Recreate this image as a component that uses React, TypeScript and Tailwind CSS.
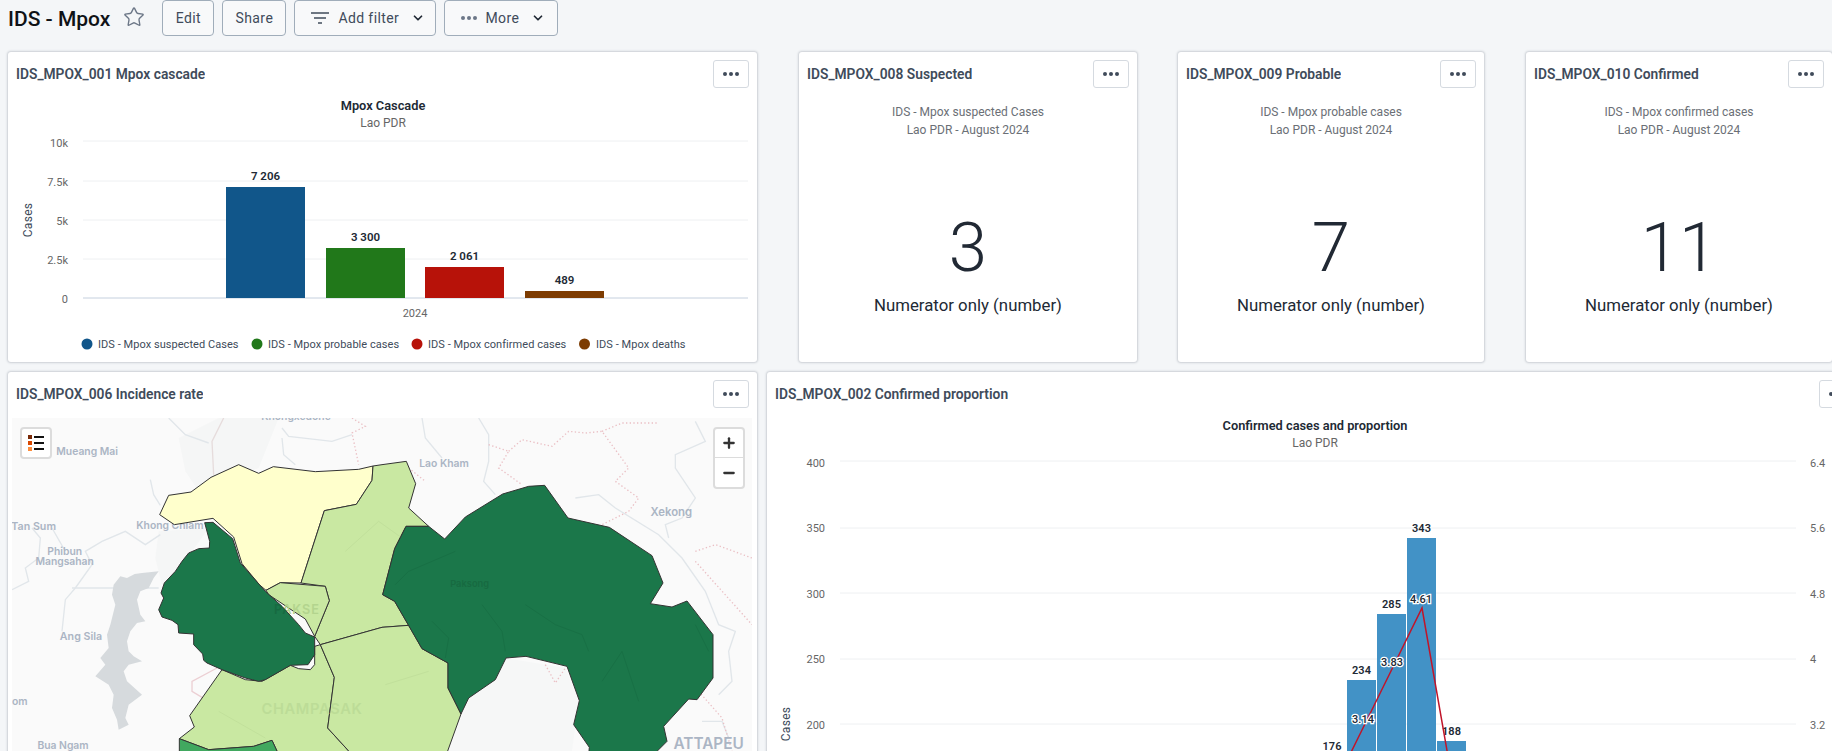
import type { ReactNode } from 'react';
import { ChevronDown, Minus, Plus, Star } from 'lucide-react';

function Dots({ fill = '#404b5a' }: { fill?: string }) {
  return (
    <svg width="18" height="6" viewBox="0 0 18 6" fill={fill}>
      <circle cx="3" cy="3" r="2" />
      <circle cx="9" cy="3" r="2" />
      <circle cx="15" cy="3" r="2" />
    </svg>
  );
}

function HeaderButton({ children, className = '' }: { children: ReactNode; className?: string }) {
  return (
    <button className={`flex h-9 items-center rounded-[4px] border border-[#a0adba] bg-[#f8f9fa] text-sm tracking-[0.4px] text-[#404b5a] ${className}`}>
      {children}
    </button>
  );
}

function Card({ title, className = '', children }: { title: string; className?: string; children: ReactNode }) {
  return (
    <div className={`shrink-0 rounded-[3px] bg-white shadow-[0_0_2px_1px_rgba(64,75,90,0.22)] ${className}`}>
      <div className="flex items-center justify-between px-2 pt-2">
        <h3 className="truncate text-[13.8px] font-semibold text-[#404b5a]">{title}</h3>
        <button className="flex h-7 w-9 shrink-0 items-center justify-center rounded-[3px] border border-[#d5dae0] bg-white">
          <Dots />
        </button>
      </div>
      {children}
    </div>
  );
}

function NumberCard({ title, sub, value, className }: { title: string; sub: string; value: string; className: string }) {
  return (
    <Card title={title} className={`h-[310px] ${className}`}>
      <div className="flex flex-col items-center pt-[15px] text-center">
        <p className="text-xs leading-[18px] text-[#6b6f76]">{sub}</p>
        <p className="text-xs leading-[18px] text-[#6b6f76]">Lao PDR - August 2024</p>
        <p className="mt-[74px] text-[69px] leading-none font-light text-[#212934]">{value}</p>
        <p className="mt-[11px] text-[16.8px] leading-6 text-[#212934]">Numerator only (number)</p>
      </div>
    </Card>
  );
}

const cascadeBars = [
  { x: 226, top: 187, fill: '#11568a', label: '7 206', ly: 180 },
  { x: 326, top: 248, fill: '#21781a', label: '3 300', ly: 241 },
  { x: 425, top: 267, fill: '#b71209', label: '2 061', ly: 260 },
  { x: 525, top: 291, fill: '#7d3c02', label: '489', ly: 284 },
];

const cascadeLegend = [
  { cx: 87, tx: 98, fill: '#11568a', label: 'IDS - Mpox suspected Cases' },
  { cx: 257, tx: 268, fill: '#21781a', label: 'IDS - Mpox probable cases' },
  { cx: 417, tx: 428, fill: '#b71209', label: 'IDS - Mpox confirmed cases' },
  { cx: 584.5, tx: 596, fill: '#7d3c02', label: 'IDS - Mpox deaths' },
];

const cascadeTicks = [
  { label: '10k', y: 141, ty: 147 },
  { label: '7.5k', y: 181, ty: 186 },
  { label: '5k', y: 220, ty: 225 },
  { label: '2.5k', y: 259, ty: 264 },
  { label: '0', y: 298, ty: 303 },
];

function CascadeChart() {
  // viewBox uses page coordinates
  return (
    <svg width="749" height="274" viewBox="8 88 749 274" className="block">
      <text x="383" y="110" textAnchor="middle" fontSize="12.8" fontWeight="600" fill="#212934">Mpox Cascade</text>
      <text x="383" y="127" textAnchor="middle" fontSize="12" fill="#666">Lao PDR</text>
      {cascadeTicks.map((t) => (
        <g key={t.label}>
          <line x1="83" x2="748" y1={t.y} y2={t.y} stroke={t.label === '0' ? '#c5d0de' : '#eef0f2'} strokeWidth="1" />
          <text x="68" y={t.ty} textAnchor="end" fontSize="11" fill="#666">{t.label}</text>
        </g>
      ))}
      <text transform="translate(32 220) rotate(-90)" textAnchor="middle" fontSize="12" letterSpacing="0.3" fill="#404b5a">Cases</text>
      {cascadeBars.map((b) => (
        <g key={b.label}>
          <rect x={b.x} y={b.top} width="79" height={298 - b.top} fill={b.fill} />
          <text x={b.x + 39.5} y={b.ly} textAnchor="middle" fontSize="11.5" fontWeight="600" fill="#212934">{b.label}</text>
        </g>
      ))}
      <text x="415" y="317" textAnchor="middle" fontSize="11" fill="#666">2024</text>
      {cascadeLegend.map((l) => (
        <g key={l.label}>
          <circle cx={l.cx} cy="344" r="5.5" fill={l.fill} />
          <text x={l.tx} y="348" fontSize="11" letterSpacing="0.05" fill="#404b5a">{l.label}</text>
        </g>
      ))}
    </svg>
  );
}

const proportionTicks = [
  { l: '400', r: '6.4', y: 461, ty: 467 },
  { l: '350', r: '5.6', y: 528, ty: 532 },
  { l: '300', r: '4.8', y: 593, ty: 598 },
  { l: '250', r: '4', y: 659, ty: 663 },
  { l: '200', r: '3.2', y: 724, ty: 729 },
];

const proportionBars = [
  { x: 1347, top: 680, label: '234', ly: 674 },
  { x: 1377, top: 614, label: '285', ly: 608 },
  { x: 1407, top: 538, label: '343', ly: 532 },
  { x: 1437, top: 741, label: '188', ly: 735 },
];

function ProportionChart() {
  return (
    <svg width="1096" height="343" viewBox="767 408 1096 343" className="block">
      <text x="1315" y="430" textAnchor="middle" fontSize="12.8" fontWeight="600" fill="#212934">Confirmed cases and proportion</text>
      <text x="1315" y="447" textAnchor="middle" fontSize="12" fill="#666">Lao PDR</text>
      {proportionTicks.map((t) => (
        <g key={t.l}>
          <line x1="840" x2="1796" y1={t.y} y2={t.y} stroke="#eef0f2" />
          <text x="825" y={t.ty} textAnchor="end" fontSize="11" fill="#666">{t.l}</text>
          <text x="1810" y={t.ty} fontSize="11" fill="#666">{t.r}</text>
        </g>
      ))}
      <text transform="translate(790 724) rotate(-90)" textAnchor="middle" fontSize="12" letterSpacing="0.3" fill="#404b5a">Cases</text>
      {proportionBars.map((b) => (
        <g key={b.label}>
          <rect x={b.x} y={b.top} width="29" height={751 - b.top} fill="#4292c6" />
          <text x={b.x + 14.5} y={b.ly} textAnchor="middle" fontSize="11" fontWeight="600" fill="#212934">{b.label}</text>
        </g>
      ))}
      <text x="1332" y="750" textAnchor="middle" fontSize="11" fontWeight="600" fill="#212934">176</text>
      <polyline points="1332,791 1362,730 1392,669 1422,608 1452,779" fill="none" stroke="#c0152a" strokeWidth="1.5" />
      {[
        { t: '3.14', x: 1363, y: 723 },
        { t: '3.83', x: 1392, y: 666 },
        { t: '4.61', x: 1421, y: 603 },
      ].map((d) => (
        <text key={d.t} x={d.x} y={d.y} textAnchor="middle" fontSize="11" fontWeight="500" fill="#212934" stroke="#fff" strokeWidth="2.5" className="[paint-order:stroke]">
          {d.t}
        </text>
      ))}
    </svg>
  );
}

// map geometry in 3x units, 2220 x 999 = 740 x 333 px
const rivers = [
  '470,0 520,50 590,75',
  '810,30 830,55 960,70 1020,50',
  '810,60 815,110 850,140',
  '415,185 425,230 445,262',
  '445,350 400,380 340,340 270,370 220,400 240,440 190,510',
  '120,330 160,400',
  '60,330 85,360 80,420 40,450 50,490 0,515',
  '190,510 160,545 150,640',
  '180,510 440,510',
  '1230,0 1240,60 1290,120',
  '1400,0 1430,50 1430,130 1415,190 1450,230',
  '1690,240 1760,230 1810,270 1940,350 2010,420 2080,520 2120,620 2170,640 2150,700 2160,790 2120,830',
  '2050,10 2080,70 1990,110 1990,150 2050,240 2010,300 1960,320 1970,360',
  '2070,910 2130,910 2150,960',
];

// faint veins that show through the choropleth
const darkVeins = [
  '1410,560 1470,640 1480,700',
  '1830,700 1770,790',
  '1830,700 1880,850',
  '2050,620 2090,700',
  '1540,560 1630,620 1710,650 1730,700',
  '1260,610 1310,660 1300,720',
  '1330,400 1190,460 1150,500',
];

const lightVeins = ['1000,400 1100,310 1170,360', '1120,800 1250,760', '620,880 760,960'];

const borders = [
  '1430,80 1490,100 1460,150 1530,200',
  '1490,100 1530,65 1620,85 1670,40 1720,45 1770,40 1850,150 1810,190 1880,240 1850,280 1770,320',
  '1770,40 1830,15 1940,15',
  '2050,400 2110,380 2220,420',
  '2050,430 2220,620',
  '2060,820 2130,900 2160,999',
  '1020,0 1060,25 1020,45 1040,140',
  '1190,150 1240,190',
  '1600,740 1630,795 1660,750',
];

const baseLabels = [
  { t: 'Mueang Mai', x: 133, y: 110, size: 31 },
  { t: 'Tan Sum', x: -2, y: 337, size: 32 },
  { t: 'Khong Chiam', x: 373, y: 333, size: 31 },
  { t: 'om', x: 0, y: 860, size: 31 },
];

const centeredLabels = [
  { t: 'Phibun', x: 158, y: 410, size: 31 },
  { t: 'Mangsahan', x: 158, y: 440, size: 31 },
  { t: 'Ang Sila', x: 207, y: 667, size: 32 },
  { t: 'Bua Ngam', x: 153, y: 994, size: 31 },
  { t: 'Khongxedone', x: 852, y: 6, size: 31 },
  { t: 'Lao Kham', x: 1296, y: 147, size: 31 },
  { t: 'Xekong', x: 1978, y: 295, size: 34 },
  { t: 'ATTAPEU', x: 2090, y: 994, size: 46 },
];

const westDistrict =
  '578,314 603,313 662,362 685,435 760,520 810,565 860,620 880,645 908,657 908,710 888,740 835,742 760,785 740,790 700,780 630,755 585,735 575,727 572,708 545,680 545,648 500,645 498,620 480,607 450,597 440,575 455,540 447,525 457,495 490,460 510,430 530,405 560,392 592,390 593,370';

function LaoMap() {
  return (
    <svg width="740" height="333" viewBox="0 0 2220 999" className="block bg-[#fafafa]" fontFamily="Inter, sans-serif" fontWeight="600">
      <clipPath id="west-district">
        <polygon points={westDistrict} />
      </clipPath>
      <polygon points="500,60 620,0 800,0 740,150 560,220 520,160" fill="#f5f6f6" />
      <polygon points="440,340 590,330 540,400 450,500 430,420" fill="#f5f6f6" />
      <polygon points="1480,720 1660,750 1700,850 1680,999 1310,999 1370,840 1450,785" fill="#f6f7f7" />
      <polyline points="635,0 600,70 605,170" fill="none" stroke="#e6dcdc" strokeWidth="4" />
      <polyline points="615,750 540,790 540,820 590,850" fill="none" stroke="#eccfd3" strokeWidth="4" />
      {rivers.map((r) => (
        <polyline key={r} points={r} fill="none" stroke="#e1e6ea" strokeWidth="4" />
      ))}
      {borders.map((b) => (
        <polyline key={b} points={b} fill="none" stroke="#eabfc4" strokeWidth="4" strokeDasharray="4 7" />
      ))}
      <polygon
        points="325,475 345,480 368,468 390,465 440,460 425,480 410,510 385,520 375,545 385,590 400,610 375,615 355,640 345,670 350,700 365,715 390,730 350,740 335,760 345,790 390,830 350,860 340,900 350,920 320,935 315,905 300,870 305,830 290,800 250,775 280,740 265,720 290,690 285,650 295,620 310,560 300,530 305,500"
        fill="#d6dadd"
      />
      {baseLabels.map((l) => (
        <text key={l.t} x={l.x} y={l.y} fontSize={l.size} fill="#abb5c4">{l.t}</text>
      ))}
      {centeredLabels.map((l) => (
        <text key={l.t} x={l.x} y={l.y} fontSize={l.size} fill="#abb5c4" textAnchor="middle">{l.t}</text>
      ))}

      <g stroke="#333" strokeWidth="3" strokeLinejoin="round">
        <polygon
          fill="#ffffcc"
          points="443,290 470,232 537,222 597,178 680,140 740,166 784,146 910,161 1040,154 1083,144 1080,187 1033,259 937,278 867,495 805,494 762,517 742,500 690,437 665,357 603,301 487,320"
        />
        <polygon
          fill="#c9e8a2"
          points="1083,144 1110,140 1183,130 1211,197 1190,270 1250,325 1182,325 1148,392 1112,530 1148,550 1190,622 1110,628 925,680 908,655 952,548 940,505 867,495 937,278 1033,259 1080,187"
        />
        <polygon fill="#c9e8a2" points="762,517 805,494 940,505 952,548 908,655 880,603 845,580 770,530" />
        <polygon
          fill="#c9e8a2"
          points="630,755 700,785 750,790 835,742 860,752 895,755 908,740 908,685 925,680 967,778 947,930 1020,1010 800,1010 780,967 725,985 590,995 502,962 547,927 533,893"
        />
        <polygon
          fill="#c9e8a2"
          points="925,680 1110,628 1190,622 1230,692 1308,735 1308,810 1347,888 1307,999 1307,1010 1020,1010 947,930 967,778"
        />
        <polygon fill="#41a85f" points="502,962 590,995 725,985 780,967 800,1010 502,1010" />
      </g>
      <text x="855" y="588" fontSize="38" letterSpacing="3" fill="#b3d48e" textAnchor="middle">PAKSE</text>
      <text x="900" y="889" fontSize="44" letterSpacing="2" fill="#bcdc97" textAnchor="middle">CHAMPASAK</text>
      {lightVeins.map((v) => (
        <polyline key={v} points={v} fill="none" stroke="#c1e09b" strokeWidth="3" />
      ))}
      <g stroke="#333" strokeWidth="3" strokeLinejoin="round">
        <polygon fill="#1b774a" points={westDistrict} />
        <polygon
          fill="#1b774a"
          points="1112,530 1148,392 1182,325 1250,325 1298,363 1360,297 1472,228 1550,205 1598,202 1668,300 1792,328 1920,413 1953,495 1915,557 1980,567 2025,549 2103,650 2103,780 2055,845 2030,843 1955,925 1965,970 1935,1000 1935,1010 1730,1010 1732,988 1685,920 1702,848 1665,745 1542,715 1482,720 1450,785 1370,840 1347,888 1308,810 1308,735 1230,692 1148,550"
        />
      </g>
      {darkVeins.map((v) => (
        <polyline key={v} points={v} fill="none" stroke="#187045" strokeWidth="3" />
      ))}
      <text x="855" y="588" fontSize="38" letterSpacing="3" fill="#176a41" textAnchor="middle" clipPath="url(#west-district)">PAKSE</text>
      <text x="1373" y="508" fontSize="28" fill="#176a41" textAnchor="middle">Paksong</text>
    </svg>
  );
}

export default function App() {
  return (
    <div className="h-[751px] w-[1832px] overflow-hidden bg-[#f4f6f8] font-[Roboto,sans-serif]">
      <header className="flex h-[52px] items-start pl-2">
        <h1 className="mt-[5px] text-[21px] leading-7 font-medium text-[#0f1216]">IDS - Mpox</h1>
        <Star size={22} strokeWidth={1.5} className="mt-[6px] ml-[13px] text-[#6c7787]" />
        <div className="ml-[17px] flex gap-2">
          <HeaderButton className="w-[52px] justify-center">Edit</HeaderButton>
          <HeaderButton className="w-[64px] justify-center">Share</HeaderButton>
          <HeaderButton className="w-[142px] pl-4">
            <svg width="18" height="14" viewBox="0 0 18 14" stroke="#404b5a" strokeWidth="1.5" className="mr-[9px]">
              <line x1="0" x2="18" y1="2" y2="2" />
              <line x1="3" x2="15" y1="7" y2="7" />
              <line x1="7" x2="11" y1="12" y2="12" />
            </svg>
            Add filter
            <ChevronDown size={14} strokeWidth={3} className="ml-3 text-[#212934]" />
          </HeaderButton>
          <HeaderButton className="w-[114px] pl-[15px]">
            <Dots fill="#6c7787" />
            <span className="ml-[7px]">More</span>
            <ChevronDown size={14} strokeWidth={3} className="ml-3 text-[#212934]" />
          </HeaderButton>
        </div>
      </header>

      <div className="flex gap-[42px] pl-2">
        <Card title="IDS_MPOX_001 Mpox cascade" className="h-[310px] w-[749px]">
          <CascadeChart />
        </Card>
        <NumberCard title="IDS_MPOX_008 Suspected" sub="IDS - Mpox suspected Cases" value="3" className="w-[338px]" />
        <NumberCard title="IDS_MPOX_009 Probable" sub="IDS - Mpox probable cases" value="7" className="-ml-px w-[306px]" />
        <NumberCard title="IDS_MPOX_010 Confirmed" sub="IDS - Mpox confirmed cases" value="11" className="w-[306px]" />
      </div>

      <div className="mt-[10px] flex gap-[10px] pl-2">
        <Card title="IDS_MPOX_006 Incidence rate" className="h-[400px] w-[749px]">
          <div className="relative mx-1 mt-[10px]">
            <LaoMap />
            <button className="absolute top-[9px] left-[8px] flex h-[32px] w-[32px] flex-col items-center justify-center gap-[2px] rounded-[4px] border-2 border-[#dcdcdc] bg-white">
              {['#7a2a08', '#d94801', '#fd8d3c'].map((c) => (
                <span key={c} className="flex items-center gap-[2px]">
                  <span className="h-1 w-1 bg-current" style={{ color: c }} />
                  <span className="h-[2px] w-[10px] bg-[#111]" />
                </span>
              ))}
            </button>
            <div className="absolute top-[9px] right-[8px] flex w-[32px] flex-col overflow-hidden rounded-[4px] border-2 border-[#dcdcdc] bg-white text-[#333]">
              <span className="flex h-[29px] items-center justify-center border-b border-[#dcdcdc]">
                <Plus size={16} strokeWidth={3.5} />
              </span>
              <span className="flex h-[29px] items-center justify-center">
                <Minus size={16} strokeWidth={3.5} />
              </span>
            </div>
          </div>
        </Card>
        <Card title="IDS_MPOX_002 Confirmed proportion" className="h-[400px] w-[1096px]">
          <ProportionChart />
        </Card>
      </div>
    </div>
  );
}
